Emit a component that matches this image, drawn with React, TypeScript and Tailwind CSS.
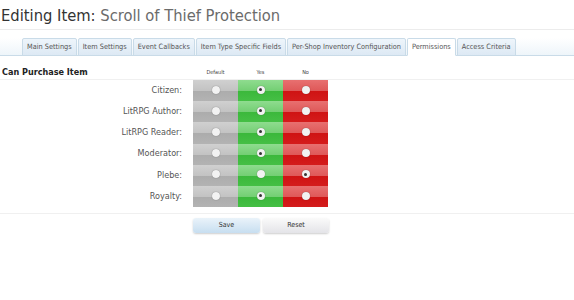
import React from "react";

const tabs = [
  "Main Settings",
  "Item Settings",
  "Event Callbacks",
  "Item Type Specific Fields",
  "Per-Shop Inventory Configuration",
  "Permissions",
  "Access Criteria",
];

const rows: { label: string; sel: 0 | 1 | 2 }[] = [
  { label: "Citizen:", sel: 1 },
  { label: "LitRPG Author:", sel: 1 },
  { label: "LitRPG Reader:", sel: 1 },
  { label: "Moderator:", sel: 1 },
  { label: "Plebe:", sel: 2 },
  { label: "Royalty:", sel: 1 },
];

const cellBg = [
  "bg-[linear-gradient(to_bottom,#d0d0d0_0%,#c3c3c3_50%,#acacac_52%,#b3b3b3_100%)]",
  "bg-[linear-gradient(to_bottom,#8fdc8f_0%,#74cf74_50%,#3bb83b_52%,#45bf45_100%)]",
  "bg-[linear-gradient(to_bottom,#e87070_0%,#df5959_50%,#cf1313_52%,#d41c1c_100%)]",
];

function Radio({ on }: { on: boolean }) {
  return (
    <span className="flex h-[8px] w-[8px] items-center justify-center rounded-full bg-[#f2f2f2] shadow-[0_0_1px_rgba(0,0,0,0.5)]">
      {on && <span className="h-[3px] w-[3px] rounded-full bg-[#333]" />}
    </span>
  );
}

export default function App() {
  const font =
    "font-['DejaVu_Sans_Condensed','Liberation_Sans_Narrow','Liberation_Sans',sans-serif]";
  return (
    <div className={`h-[300px] w-[574px] overflow-hidden bg-white ${font}`}>
      <div className="h-[5px]" />
      <h1 className="pl-[1px] text-[16.4px] leading-[22px] text-[#333]">
        Editing Item: <span className="text-[#6b6b6b]">Scroll of Thief Protection</span>
      </h1>
      <div className="mt-[2px] h-px bg-[#ececec]" />
      <div className="mt-[8px] flex h-[18px] border-b border-[#c9dbe8] bg-[linear-gradient(to_bottom,#ffffff_0%,#eef5fa_100%)] pl-[22px]">
        {tabs.map((t) => {
          const active = t === "Permissions";
          return (
            <div
              key={t}
              className={`-mb-px mr-px flex h-[18px] items-center rounded-t-[2px] border border-[#c9dbe8] px-[4px] text-[7.3px] text-[#555] ${
                active
                  ? "border-b-white bg-white"
                  : "bg-[linear-gradient(to_bottom,#eef5fb_0%,#dde9f4_100%)]"
              }`}
            >
              {t}
            </div>
          );
        })}
      </div>
      <div className="mt-[11px] flex h-[13px] items-end border-b border-[#f0f0f0]">
        <div className="w-[193px] pl-[2px] text-[9px] font-bold text-[#222]">
          Can Purchase Item
        </div>
        <div className="flex pb-[3px] text-[5.5px] text-[#444]">
          <div className="w-[45px] text-center">Default</div>
          <div className="w-[45px] text-center">Yes</div>
          <div className="w-[45px] text-center">No</div>
        </div>
      </div>
      <div className="flex flex-col">
        {rows.map((r) => (
          <div key={r.label} className="flex h-[21.2px] items-center">
            <div className="w-[183px] pr-px text-right text-[9px] text-[#555]">{r.label}</div>
            <div className="ml-[10px] flex h-full">
              {[0, 1, 2].map((c) => (
                <div
                  key={c}
                  className={`flex h-full w-[45px] items-center justify-center pb-[2px] ${cellBg[c]}`}
                >
                  <Radio on={r.sel === c} />
                </div>
              ))}
            </div>
          </div>
        ))}
      </div>
      <div className="mt-[6px] h-px bg-[#f0f0f0]" />
      <div className="mt-[4px] flex pl-[193px]">
        <button className="h-[15px] w-[67px] rounded-[3px] bg-[linear-gradient(to_bottom,#eaf3fa_0%,#c7def0_100%)] text-[7px] text-[#333] shadow-[0_1px_2px_rgba(0,0,0,0.2)]">
          Save
        </button>
        <button className="ml-[3px] h-[15px] w-[66px] rounded-[3px] bg-[linear-gradient(to_bottom,#fafafa_0%,#e4e4e8_100%)] text-[7px] text-[#333] shadow-[0_1px_2px_rgba(0,0,0,0.2)]">
          Reset
        </button>
      </div>
    </div>
  );
}
